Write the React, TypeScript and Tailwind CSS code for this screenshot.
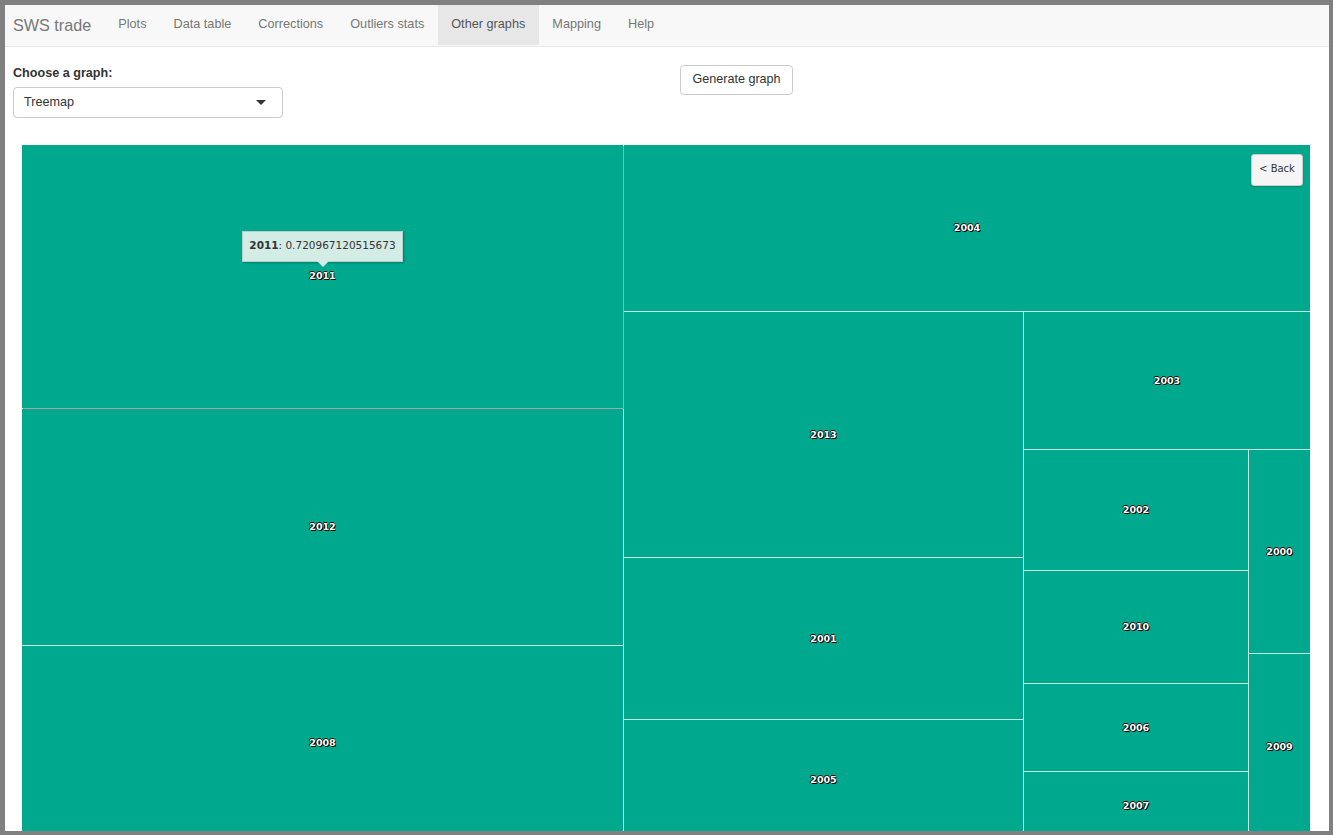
import React from 'react'

const NAV = ['Plots', 'Data table', 'Corrections', 'Outliers stats', 'Other graphs', 'Mapping', 'Help']

function Cell({ label, className = '' }: { label: string; className?: string }) {
  return (
    <div className={`relative flex items-center justify-center bg-[#00a88e] ${className}`}>
      <span className="font-['DejaVu_Sans',sans-serif] text-[9.5px] font-bold leading-none text-white [text-shadow:1px_1px_0_#000,-1px_0_0_#000,0_-1px_0_#000]">
        {label}
      </span>
    </div>
  )
}

export default function App() {
  return (
    <div className="h-screen w-screen overflow-hidden bg-[#808080] pt-[5px] pr-[4px] pb-[4px] pl-[5px]">
      <div className="h-full w-full overflow-hidden bg-white font-['Liberation_Sans',Arial,sans-serif] text-[12.6px] text-[#333]">
        {/* navbar */}
        <nav className="flex h-[42px] items-stretch border-b border-[#e7e7e7] bg-[#f8f8f8] pb-[1px]">
          <div className="flex items-center pr-[13.5px] pl-[8px] text-[16.2px] text-[#777]">SWS trade</div>
          {NAV.map((n) => (
            <div
              key={n}
              className={`flex items-center px-[13.5px] text-[12.7px] ${n === 'Other graphs' ? 'bg-[#e7e7e7] text-[#555]' : 'text-[#777]'}`}
            >
              {n}
            </div>
          ))}
        </nav>

        {/* controls */}
        <div className="flex pl-[8px] pt-[17px]">
          <div className="w-[270px]">
            <div className="mb-[5px] h-[18px] leading-[18px] font-bold">Choose a graph:</div>
            <div className="flex h-[31px] items-center justify-between rounded-[4px] border border-[#ccc] bg-white pr-[16px] pl-[10px]">
              <span>Treemap</span>
              <span className="h-0 w-0 border-x-[5px] border-t-[5px] border-x-transparent border-t-[#333]" />
            </div>
          </div>
          <div className="ml-[397px] pt-[1px]">
            <button className="h-[30px] w-[113px] rounded-[4px] border border-[#ccc] bg-white pb-[2px] text-[#333]">
              Generate graph
            </button>
          </div>
        </div>

        {/* treemap */}
        <div className="relative mt-[27px] ml-[17px] flex h-[695px] w-[1288px] gap-px bg-[#c4ebe2]">
          <div className="flex w-[601px] flex-col gap-px">
            <div className="relative z-10 flex h-[263px] items-center justify-center bg-[#00a88e] shadow-[1px_1px_0_#a5a5a5]">
              <span className="-mt-[2px] font-['DejaVu_Sans',sans-serif] text-[9.5px] font-bold leading-none text-white [text-shadow:1px_1px_0_#000,-1px_0_0_#000,0_-1px_0_#000]">
                2011
              </span>
              <div className="absolute top-[86px] left-[220px] flex h-[31px] w-[161px] items-center justify-center border border-[#b9cfc9] bg-[#d4ece6] pb-[2px] font-['DejaVu_Sans',sans-serif] text-[10.5px] text-[#333] shadow-[1px_1px_2px_rgba(0,0,0,0.25)]">
                <span>
                  <b>2011</b>: 0.720967120515673
                </span>
                <span className="absolute -bottom-[6px] left-[74px] h-0 w-0 border-x-[6px] border-t-[6px] border-x-transparent border-t-[#d4ece6]" />
              </div>
            </div>
            <Cell label="2012" className="h-[236px]" />
            <Cell label="2008" className="flex-1" />
          </div>
          <div className="flex flex-1 flex-col gap-px">
            <Cell label="2004" className="h-[166px]" />
            <div className="flex flex-1 gap-px">
              <div className="flex w-[399px] flex-col gap-px">
                <Cell label="2013" className="h-[245px]" />
                <Cell label="2001" className="h-[161px]" />
                <Cell label="2005" className="flex-1" />
              </div>
              <div className="flex flex-1 flex-col gap-px">
                <Cell label="2003" className="h-[137px]" />
                <div className="flex flex-1 gap-px">
                  <div className="flex w-[224px] flex-col gap-px">
                    <Cell label="2002" className="h-[120px]" />
                    <Cell label="2010" className="h-[112px]" />
                    <Cell label="2006" className="h-[87px]" />
                    <Cell label="2007" className="flex-1" />
                  </div>
                  <div className="flex flex-1 flex-col gap-px">
                    <Cell label="2000" className="h-[203px]" />
                    <Cell label="2009" className="flex-1" />
                  </div>
                </div>
              </div>
            </div>
          </div>

          {/* back button over the treemap */}
          <button className="absolute top-[9px] right-[7px] z-20 h-[32px] w-[52px] rounded-[3px] border border-[#ccc] bg-[#f5f5f5] pb-[3px] font-['DejaVu_Sans',sans-serif] text-[10px] text-[#333] shadow-[0_1px_2px_rgba(0,0,0,0.2)]">
            &lt; Back
          </button>
        </div>
      </div>
    </div>
  )
}
